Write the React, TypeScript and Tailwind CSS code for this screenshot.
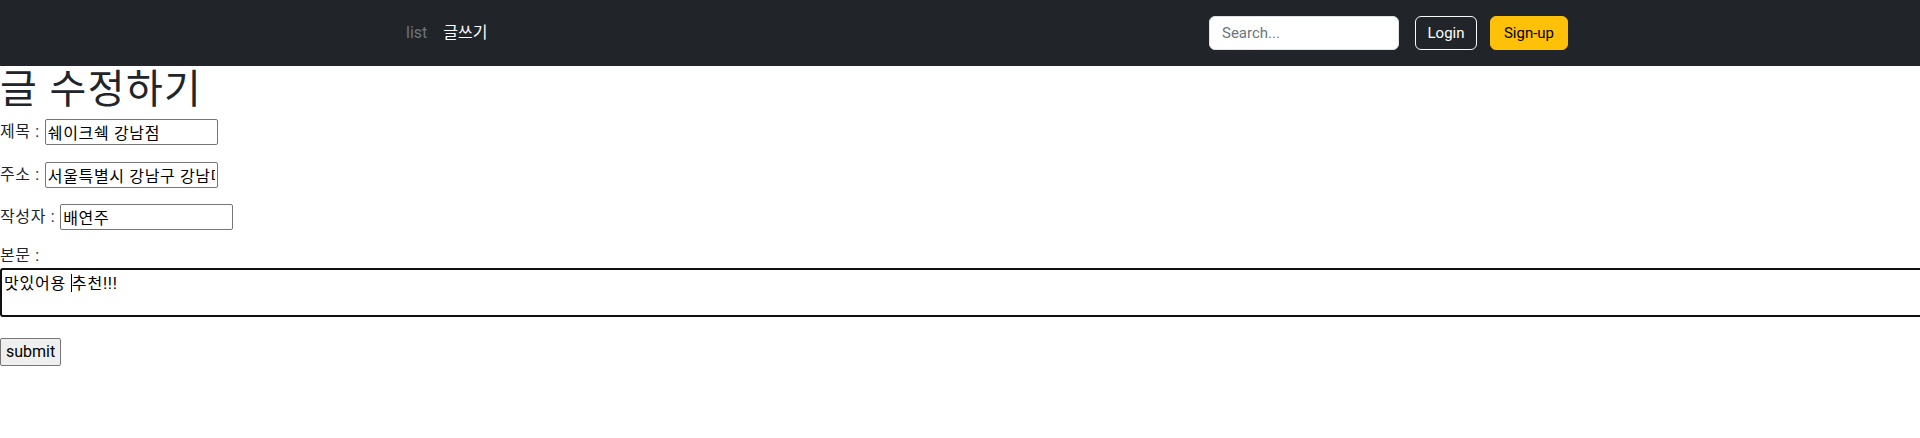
import { useState } from "react";

const navLinks = [
  { label: "list", active: false },
  { label: "글쓰기", active: true },
];

function Header() {
  return (
    <header className="flex h-[66px] items-center justify-between bg-[#212529] pl-[398px] pr-[352px]">
      <ul className="flex items-center">
        {navLinks.map((link) => (
          <li key={link.label}>
            <a
              href="#"
              className={
                link.active
                  ? "block px-2 text-[16px] leading-6 text-white"
                  : "block px-2 text-[16px] leading-6 text-[#6c757d]"
              }
            >
              {link.label}
            </a>
          </li>
        ))}
      </ul>
      <div className="flex items-center">
        <input
          type="search"
          placeholder="Search..."
          className="h-[34px] w-[190px] rounded-[6px] border border-[#dee2e6] bg-white px-3 text-[15px] text-[#212529] placeholder:text-[#6c757d] outline-none"
        />
        <button className="ml-4 h-[34px] w-[62px] rounded-[6px] border border-[#f8f9fa] text-[15px] text-white">
          Login
        </button>
        <button className="ml-[13px] h-[34px] w-[78px] rounded-[6px] border border-[#ffc107] bg-[#ffc107] text-[15px] text-black">
          Sign-up
        </button>
      </div>
    </header>
  );
}

function Field({ label, value, onChange }: { label: string; value: string; onChange: (v: string) => void }) {
  return (
    <div className="flex h-[26px] items-center">
      <span className="mr-[5px] text-[16px] leading-6 tracking-[0.04em] text-[#212529]">{label} :</span>
      <input
        type="text"
        value={value}
        onChange={(e) => onChange(e.target.value)}
        className="h-[26px] w-[173px] rounded-[2px] border border-[#767676] bg-white px-[2px] text-[16px] tracking-[0.04em] text-black outline-none"
      />
    </div>
  );
}

export default function App() {
  const [title, setTitle] = useState("쉐이크쉑 강남점");
  const [address, setAddress] = useState("서울특별시 강남구 강남대로 452");
  const [writer, setWriter] = useState("배연주");

  return (
    <div className="min-h-[438px] overflow-x-hidden bg-white font-[Roboto,'Noto_Sans_CJK_KR',sans-serif] text-[#212529]">
      <Header />
      <h1 className="mb-[5px] text-[40px] leading-[48px] font-normal tracking-[0.035em]">글 수정하기</h1>
      <form className="flex flex-col" onSubmit={(e) => e.preventDefault()}>
        <Field label="제목" value={title} onChange={setTitle} />
        <div className="h-[17px]" />
        <Field label="주소" value={address} onChange={setAddress} />
        <div className="h-[16px]" />
        <Field label="작성자" value={writer} onChange={setWriter} />
        <span className="mt-[14px] text-[16px] leading-6 tracking-[0.04em]">본문 :</span>
        {/* focused textarea, caret after the first word; wider than the viewport */}
        <div className="h-[49px] w-[calc(100%+8px)] rounded-[3px] border-2 border-[#101010] px-[2px] pt-[1px] text-[16px] leading-[20px] tracking-[0.05em] text-black">
          맛있어용 <span className="inline-block h-[18px] w-px translate-y-[3px] bg-black" />추천!!!
        </div>
        <div className="mt-[21px]">
          <button
            type="submit"
            className="h-[28px] w-[61px] rounded-[2px] border border-[#767676] bg-[#efefef] text-[16px] text-black"
          >
            submit
          </button>
        </div>
      </form>
    </div>
  );
}
